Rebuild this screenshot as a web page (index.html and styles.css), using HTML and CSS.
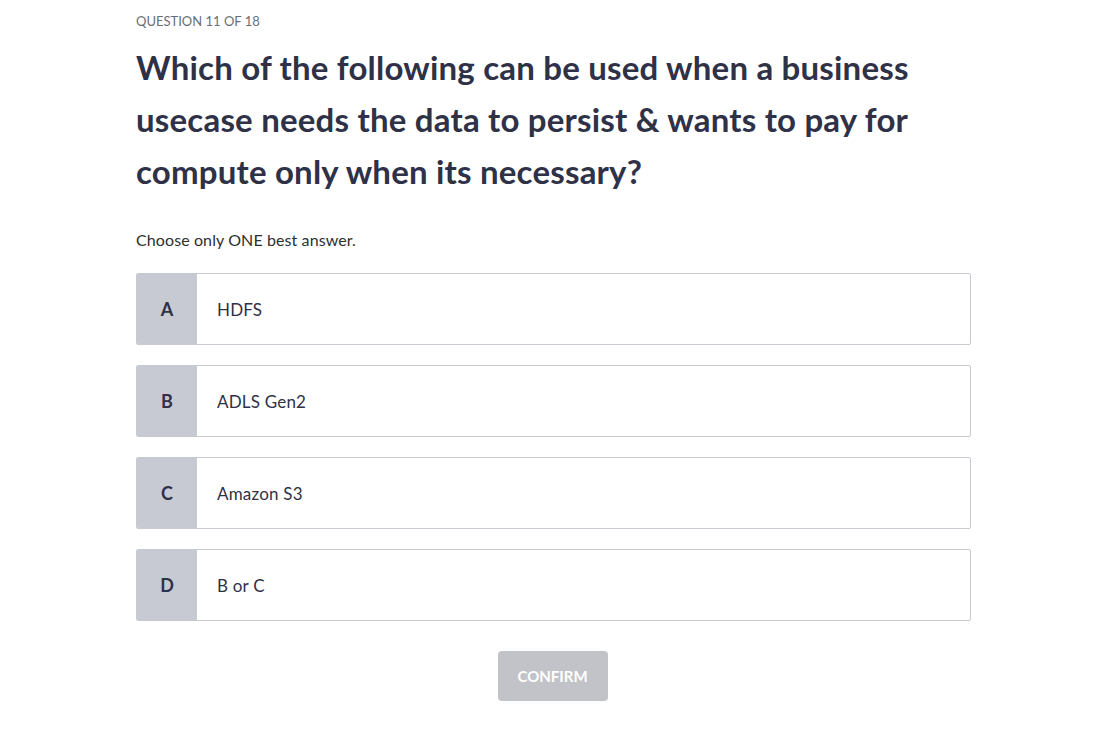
FILE: index.html
```html
<!DOCTYPE html>
<html>
<head>
<meta charset="utf-8">
<link rel="stylesheet" href="styles.css">
</head>
<body>
<main class="quiz">
  <div class="counter">QUESTION 11 OF 18</div>
  <h1 class="question">Which of the following can be used when a business usecase needs the data to persist &amp; wants to pay for compute only when its necessary?</h1>
  <p class="hint">Choose only ONE best answer.</p>
  <div class="options">
    <div class="option"><div class="letter">A</div><div class="text">HDFS</div></div>
    <div class="option"><div class="letter">B</div><div class="text">ADLS Gen2</div></div>
    <div class="option"><div class="letter">C</div><div class="text">Amazon S3</div></div>
    <div class="option"><div class="letter">D</div><div class="text">B or C</div></div>
  </div>
  <div class="actions"><button class="confirm">CONFIRM</button></div>
</main>
</body>
</html>
```
FILE: styles.css
```css
html, body { margin: 0; padding: 0; background: #fff; }
body { font-family: Lato, "Open Sans", sans-serif; color: #2d2f31; }
.quiz { width: 835px; margin-left: 136px; padding-top: 13px; }
.counter { font-size: 13px; line-height: 16px; color: #6a6f73; }
.question { margin: 12px 0 0 0; font-size: 33px; line-height: 52px; font-weight: 700; color: #2f3147; width: 800px; letter-spacing: 0.2px; }
.hint { margin: 33px 0 0 0; font-size: 16px; line-height: 20px; color: #2d2f31; letter-spacing: 0.1px; }
.options { margin-top: 23px; display: flex; flex-direction: column; gap: 20px; }
.option { display: flex; height: 72px; border: 1px solid #c8cad1; border-radius: 2px; box-sizing: border-box; overflow: hidden; }
.letter { width: 60px; background: #c8cad3; display: flex; align-items: center; justify-content: center; font-weight: 700; font-size: 18px; color: #2f3147; }
.text { display: flex; align-items: center; padding-left: 20px; font-size: 17px; color: #2f3147; letter-spacing: 0.2px; }
.actions { display: flex; justify-content: center; margin-top: 30px; padding-right: 2px; }
.confirm { width: 110px; height: 50px; border: none; border-radius: 4px; background: #c2c3c8; color: #fff; font-family: inherit; font-size: 15px; font-weight: 700; letter-spacing: 0; }
```
